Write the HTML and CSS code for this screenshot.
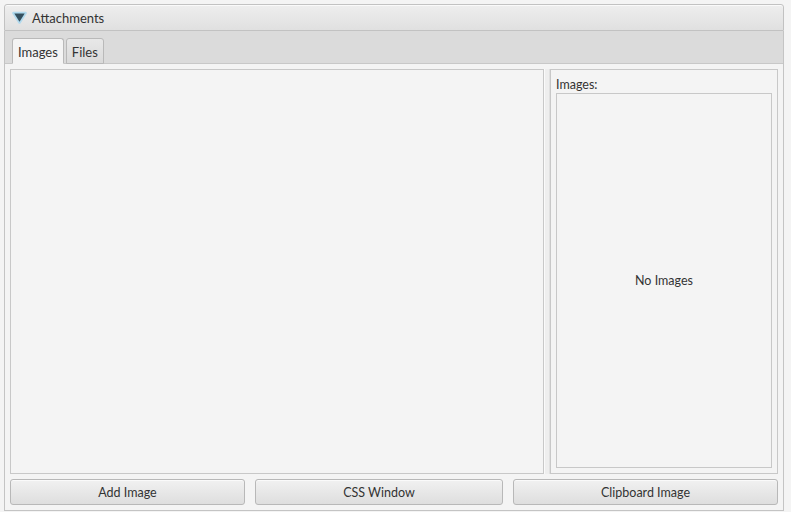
FILE: index.html
```html
<!DOCTYPE html>
<html>
<head>
<meta charset="utf-8">
<link rel="stylesheet" href="styles.css">
</head>
<body>
<div class="titled">
  <div class="title">
    <svg class="arrow" width="15" height="13" viewBox="0 0 15 13">
      <path d="M1.5 2 L13.5 2 L7.5 11.5 Z" fill="#a8d8f0" stroke="#a8d8f0" stroke-width="2.6" stroke-linejoin="round" opacity="0.85"/>
      <path d="M2.3 2.6 L12.7 2.6 L7.5 10.8 Z" fill="#35505f"/>
    </svg>
    <span class="title-text">Attachments</span>
  </div>
  <div class="pane">
    <div class="tabbar">
      <div class="tab selected">Images</div>
      <div class="tab">Files</div>
    </div>
    <div class="tabcontent">
      <div class="split">
        <div class="leftbox"></div>
        <div class="divider"></div>
        <div class="rightbox">
          <div class="label">Images:</div>
          <div class="list">No Images</div>
        </div>
      </div>
      <div class="buttons">
        <div class="btn b1">Add Image</div>
        <div class="btn b2">CSS Window</div>
        <div class="btn b3">Clipboard Image</div>
      </div>
    </div>
  </div>
</div>
</body>
</html>
```
FILE: styles.css
```css
* { box-sizing: border-box; }
html, body { margin: 0; padding: 0; }
body {
  background: #f4f4f4;
  font-family: Lato, "Open Sans", sans-serif;
  font-size: 13px;
  color: #333333;
  width: 791px;
  height: 512px;
  overflow: hidden;
}
.titled {
  margin: 4px 0 0 4px;
  width: 780px;
  height: 507px;
  display: flex;
  flex-direction: column;
}
.title {
  height: 27px;
  border: 1px solid #c2c2c2;
  border-radius: 3px 3px 0 0;
  background: linear-gradient(#eeeeee, #e0e0e0);
  box-shadow: inset 0 1px 0 #fafafa;
  display: flex;
  align-items: center;
  padding-left: 7px;
}
.arrow { margin-right: 5px; margin-top: 0; }
.title-text { line-height: 16px; }
.pane {
  flex: 1;
  border: 1px solid #c4c4c4;
  border-top: none;
  display: flex;
  flex-direction: column;
}
.tabbar {
  height: 33px;
  background: #dbdbdb;
  display: flex;
  align-items: flex-end;
  padding-left: 7px;
  gap: 2px;
  border-bottom: 1px solid #c8c8c8;
}
.tab {
  height: 26px;
  margin-bottom: -1px;
  border: 1px solid #b9b9b9;
  border-radius: 3px 3px 0 0;
  background: linear-gradient(#e8e8e8, #dadada);
  padding: 0 5px;
  display: flex;
  align-items: center;
  padding-top: 1px;
}
.tab.selected {
  background: #f4f4f4;
  border-bottom-color: #f4f4f4;
}
.tabcontent {
  flex: 1;
  padding: 5px;
  display: flex;
  flex-direction: column;
  gap: 5px;
}
.split {
  flex: 1;
  display: flex;
}
.leftbox {
  width: 534px;
  border: 1px solid #c8c8c8;
  background: #f4f4f4;
}
.divider {
  width: 6px;
  background: #eeeeee;
  border-left: 1px solid #fafafa;
  border-right: 1px solid #e0e0e0;
}
.rightbox {
  width: 228px;
  border: 1px solid #c8c8c8;
  padding: 5px;
  display: flex;
  flex-direction: column;
  gap: 0;
}
.label { height: 17px; line-height: 17px; font-size: 12.5px; margin-top: 1px; }
.list {
  flex: 1;
  border: 1px solid #c8c8c8;
  display: flex;
  align-items: center;
  justify-content: center;
  font-size: 12.5px;
}
.buttons {
  display: flex;
  gap: 10px;
  height: 26px;
}
.btn {
  height: 26px;
  border: 1px solid #b8b8b8;
  border-radius: 3px;
  background: linear-gradient(#f1f1f1, #dedede);
  box-shadow: inset 0 1px 0 #fafafa;
  display: flex;
  align-items: center;
  justify-content: center;
  font-size: 12.5px;
}
.b1 { width: 235px; }
.b2 { width: 248px; }
.b3 { width: 265px; }
```
